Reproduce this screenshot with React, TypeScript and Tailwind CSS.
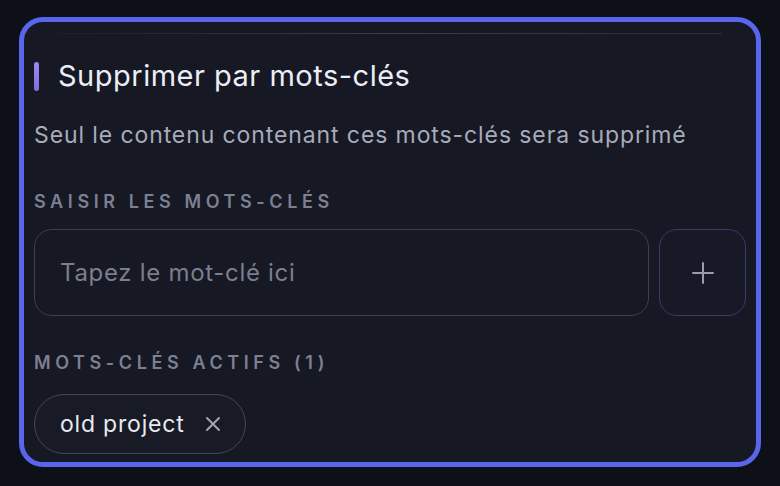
import { useState } from 'react'

export default function App() {
  const [keywords, setKeywords] = useState<string[]>(['old project'])
  const [value, setValue] = useState('')

  const add = () => {
    const v = value.trim()
    if (!v) return
    setKeywords((k) => [...k, v])
    setValue('')
  }

  return (
    <div
      className="flex h-[486px] w-[780px] bg-[#0e1018] px-[19px] pt-[17px] pb-[19px]"
      style={{ fontFamily: 'Inter, "Noto Sans", sans-serif' }}
    >
      <div className="flex flex-1 flex-col overflow-hidden rounded-[24px] border-[5px] border-[#5a65ee] bg-[#161823] px-[10px]">
        {/* faint divider at the top of the section */}
        <div className="mx-[24px] mt-[11px] h-px bg-gradient-to-r from-[#1c1e29] via-[#3a3c4a] to-[#2a2c38]" />

        {/* title */}
        <div className="mt-[25px] flex items-center gap-[19px]">
          <div className="h-[29px] w-[5px] rounded-full bg-gradient-to-b from-[#9a8cf2] to-[#7b6fe0]" />
          <h2 className="text-[29px] leading-[34px] font-normal tracking-[0.5px] text-[#eceef5]">
            Supprimer par mots-clés
          </h2>
        </div>

        <p className="mt-[28px] text-[23px] leading-[28px] tracking-[0.9px] text-[#a8abba]">
          Seul le contenu contenant ces mots-clés sera supprimé
        </p>

        {/* input */}
        <div className="mt-[43px] text-[18px] leading-[20px] font-semibold tracking-[4.6px] text-[#7d8092]">
          SAISIR LES MOTS-CLÉS
        </div>
        <div className="mt-[17px] flex gap-[10px]">
          <input
            value={value}
            onChange={(e) => setValue(e.target.value)}
            onKeyDown={(e) => e.key === 'Enter' && add()}
            placeholder="Tapez le mot-clé ici"
            className="h-[87px] flex-1 rounded-[18px] border border-[#3d3f4e] bg-transparent px-[25px] text-[24px] tracking-[0.7px] text-[#e6e7ee] outline-none placeholder:text-[#7b7e8e]"
          />
          <button
            onClick={add}
            className="flex h-[87px] w-[87px] items-center justify-center rounded-[18px] border border-[#3a3a72] bg-[#171926] text-[#9a9cab]"
          >
            <svg width="22" height="22" viewBox="0 0 22 22" fill="none" stroke="currentColor" strokeWidth="2" strokeLinecap="round">
              <path d="M11 1v20M1 11h20" />
            </svg>
          </button>
        </div>

        {/* active */}
        <div className="mt-[37px] text-[18px] leading-[20px] font-semibold tracking-[4.6px] text-[#7d8092]">
          MOTS-CLÉS ACTIFS ({keywords.length})
        </div>
        <div className="mt-[21px] flex flex-wrap gap-[10px]">
          {keywords.map((k, i) => (
            <div
              key={i}
              className="flex h-[60px] items-center gap-[20px] rounded-full border border-[#44465a] bg-[#181a26] pr-[24px] pl-[25px]"
            >
              <span className="text-[23px] tracking-[0.8px] text-[#e8e9f0]">{k}</span>
              <button
                onClick={() => setKeywords((ks) => ks.filter((_, j) => j !== i))}
                className="text-[#a2a4b2]"
              >
                <svg width="16" height="16" viewBox="0 0 16 16" fill="none" stroke="currentColor" strokeWidth="2" strokeLinecap="round">
                  <path d="M2 2l12 12M14 2L2 14" />
                </svg>
              </button>
            </div>
          ))}
        </div>
      </div>
    </div>
  )
}
